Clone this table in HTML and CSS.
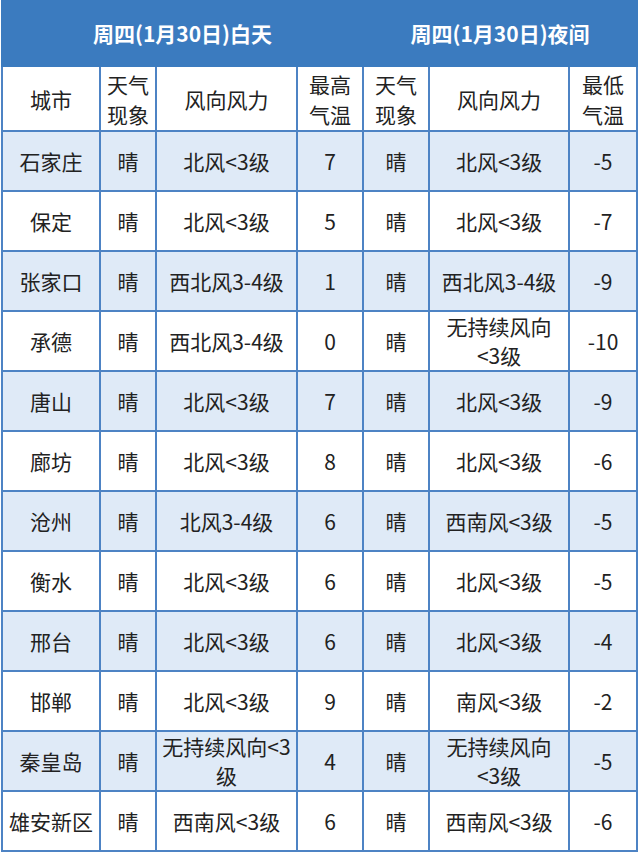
FILE: index.html
```html
<!DOCTYPE html>
<html lang="zh">
<head>
<meta charset="utf-8">
<title>天气预报</title>
<link rel="stylesheet" href="styles.css">
</head>
<body>
<table class="weather">
  <colgroup>
    <col class="c-city"><col class="c-wx"><col class="c-wind"><col class="c-temp">
    <col class="c-wx2"><col class="c-wind2"><col class="c-temp2">
  </colgroup>
  <thead>
    <tr class="band">
      <th colspan="4" class="band-day">周四(1月30日)白天</th>
      <th colspan="3" class="band-night">周四(1月30日)夜间</th>
    </tr>
    <tr class="head">
      <th>城市</th><th>天气<br>现象</th><th>风向风力</th><th>最高<br>气温</th>
      <th>天气<br>现象</th><th>风向风力</th><th>最低<br>气温</th>
    </tr>
  </thead>
  <tbody>
    <tr class="alt"><td>石家庄</td><td>晴</td><td>北风&lt;3级</td><td>7</td><td>晴</td><td>北风&lt;3级</td><td>-5</td></tr>
    <tr><td>保定</td><td>晴</td><td>北风&lt;3级</td><td>5</td><td>晴</td><td>北风&lt;3级</td><td>-7</td></tr>
    <tr class="alt"><td>张家口</td><td>晴</td><td>西北风3-4级</td><td>1</td><td>晴</td><td>西北风3-4级</td><td>-9</td></tr>
    <tr><td>承德</td><td>晴</td><td>西北风3-4级</td><td>0</td><td>晴</td><td class="two">无持续风向<br>&lt;3级</td><td>-10</td></tr>
    <tr class="alt"><td>唐山</td><td>晴</td><td>北风&lt;3级</td><td>7</td><td>晴</td><td>北风&lt;3级</td><td>-9</td></tr>
    <tr><td>廊坊</td><td>晴</td><td>北风&lt;3级</td><td>8</td><td>晴</td><td>北风&lt;3级</td><td>-6</td></tr>
    <tr class="alt"><td>沧州</td><td>晴</td><td>北风3-4级</td><td>6</td><td>晴</td><td>西南风&lt;3级</td><td>-5</td></tr>
    <tr><td>衡水</td><td>晴</td><td>北风&lt;3级</td><td>6</td><td>晴</td><td>北风&lt;3级</td><td>-5</td></tr>
    <tr class="alt"><td>邢台</td><td>晴</td><td>北风&lt;3级</td><td>6</td><td>晴</td><td>北风&lt;3级</td><td>-4</td></tr>
    <tr><td>邯郸</td><td>晴</td><td>北风&lt;3级</td><td>9</td><td>晴</td><td>南风&lt;3级</td><td>-2</td></tr>
    <tr class="alt"><td>秦皇岛</td><td>晴</td><td class="two">无持续风向&lt;3<br>级</td><td>4</td><td>晴</td><td class="two">无持续风向<br>&lt;3级</td><td>-5</td></tr>
    <tr><td>雄安新区</td><td>晴</td><td>西南风&lt;3级</td><td>6</td><td>晴</td><td>西南风&lt;3级</td><td>-6</td></tr>
  </tbody>
</table>
</body>
</html>
```
FILE: styles.css
```css
html, body {
  margin: 0;
  padding: 0;
  background: #ffffff;
}

.weather {
  margin: 0 0 0 1px;
  width: 637px;
  table-layout: fixed;
  border-collapse: collapse;
  font-family: "Noto Sans CJK SC", "Microsoft YaHei", sans-serif;
  font-size: 21px;
  color: #222222;
}

.c-city { width: 98px; }
.c-wx { width: 56px; }
.c-wind { width: 141px; }
.c-temp { width: 66px; }
.c-wx2 { width: 66px; }
.c-wind2 { width: 140px; }
.c-temp2 { width: 68px; }

.weather th,
.weather td {
  border: 2px solid #4d83c4;
  padding: 0;
  text-align: center;
  vertical-align: middle;
  line-height: 30px;
  font-weight: 400;
  white-space: nowrap;
  overflow: hidden;
}

.weather td.two {
  line-height: 29px;
}

.weather .band th {
  background: #3b7bbf;
  border-color: #3b7bbf;
  color: #ffffff;
  font-weight: 700;
  font-size: 21px;
  height: 61px;
  padding-bottom: 2px;
}

.weather .head th {
  height: 63px;
  background: #ffffff;
}

.weather tbody tr td {
  height: 58px;
}

.weather tbody tr.alt td {
  background: #dfeaf7;
}
```
